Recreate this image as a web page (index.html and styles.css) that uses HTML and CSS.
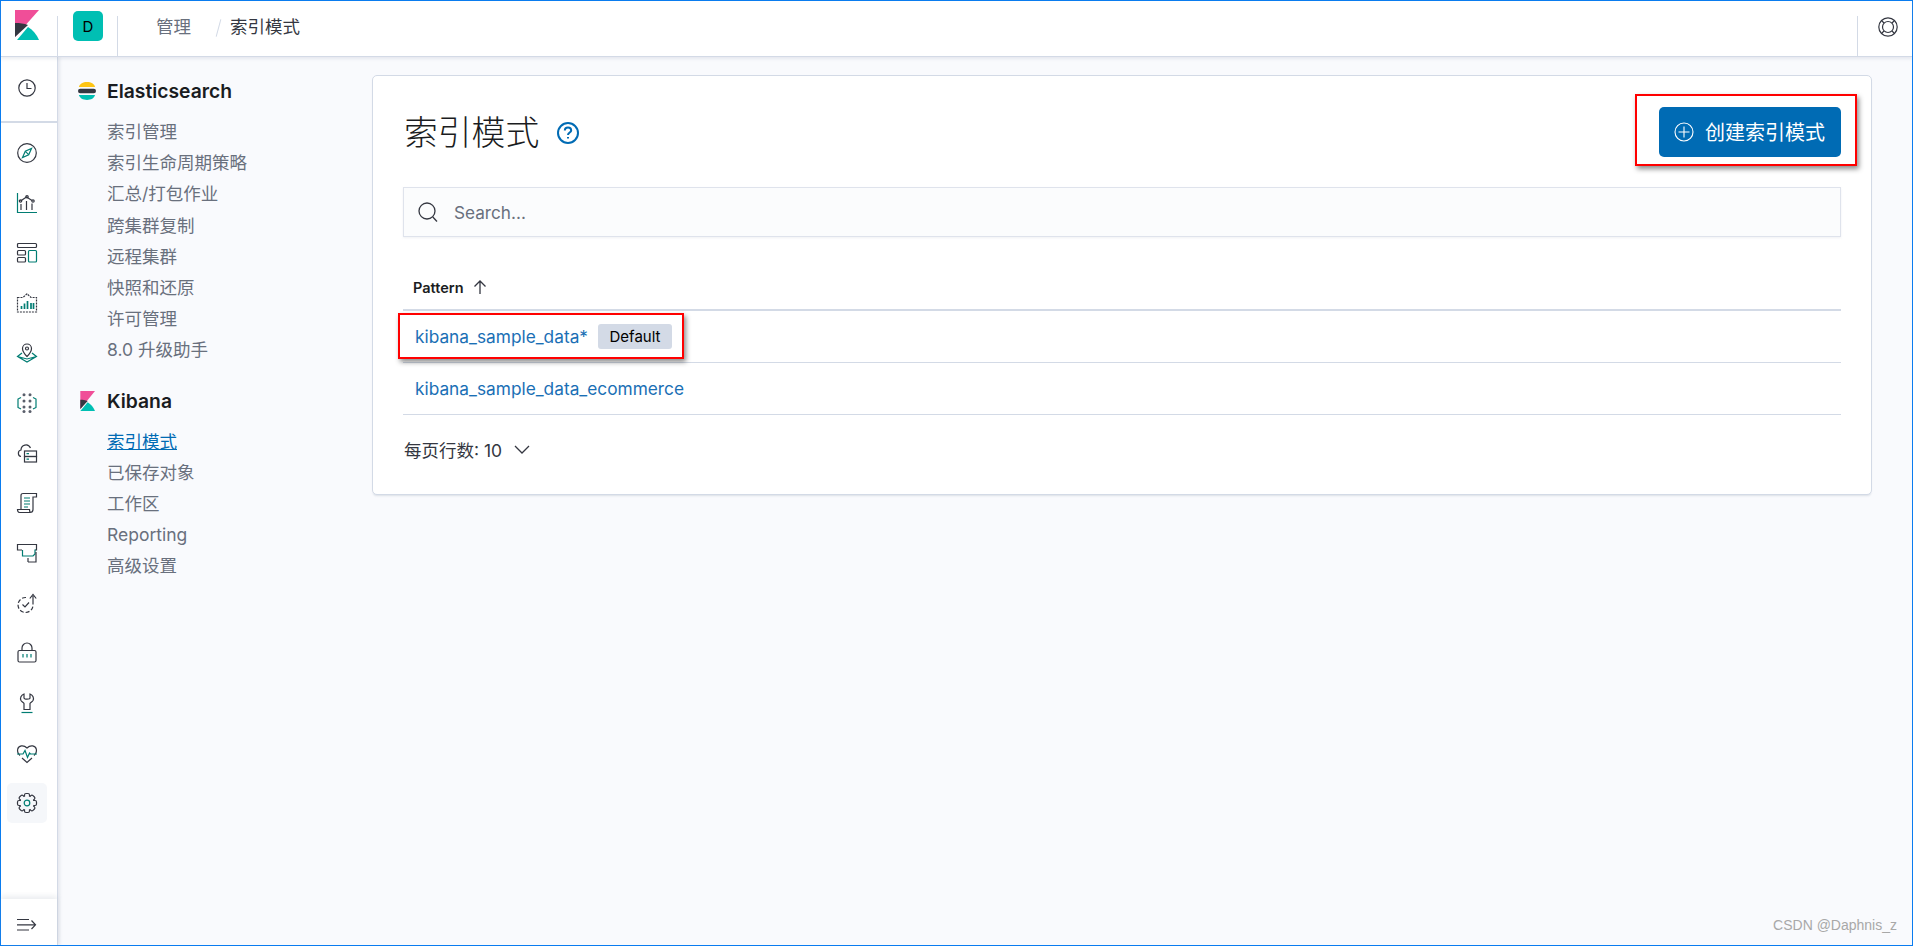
FILE: index.html
```html
<!DOCTYPE html>
<html lang="zh">
<head>
<meta charset="utf-8">
<title>索引模式 - Kibana</title>
<link rel="stylesheet" href="styles.css">
</head>
<body>
<div class="app">
  <header class="topbar">
    <div class="logo-cell">
      <svg class="logo" viewBox="0 0 24 30"><path class="k-pink" d="M0 0H24L0 27Z"/><path class="k-dark" d="M0 13C5 13 9 13.600 13 15L0 27Z"/><path class="k-teal" d="M2 30L13 17C18 20 22 25 24 30Z"/></svg>
    </div>
    <span class="vline"></span>
    <div class="avatar-cell"><span class="avatar">D</span></div>
    <span class="vline"></span>
    <nav class="crumbs"><span class="crumb">管理</span><span class="crumb-sep"></span><span class="crumb-current">索引模式</span></nav>
    <span class="vline"></span>
    <div class="help-cell">
      <svg class="ico" viewBox="0 0 20 20"><circle class="d" cx="10" cy="10" r="9.200"/><circle class="d" cx="10" cy="10" r="5.500"/><path class="d" d="M3.500 3.500L6 6M16.500 3.500L14 6M3.500 16.500L6 14M16.500 16.500L14 14" stroke-width="3"/></svg>
    </div>
  </header>
  <div class="body">
    <aside class="rail">
      <div class="rail-top">
        <a class="rail-item"><svg class="ico" viewBox="0 0 20 20"><circle class="d" cx="10" cy="10" r="8.200"/><path class="d" d="M10 5V10.500H14.500"/></svg></a>
      </div>
      <div class="rail-list">
        <a class="rail-item"><svg class="ico" viewBox="0 0 20 20"><circle class="d" cx="10" cy="10" r="9.300"/><path class="t" d="M14.500 5.500L11.700 11.700L5.500 14.500L8.300 8.300Z"/><path class="t" d="M8.300 8.300L11.700 11.700"/></svg></a>
        <a class="rail-item"><svg class="ico" viewBox="0 0 20 20"><path class="t" d="M.5 0V19.500H20"/><path class="d" d="M3.500 8L9.500 4L15 7.500M4 11V17M9.500 8V17M15 10.500V17"/><circle class="d" cx="3.500" cy="8" r="1.200"/><circle class="d" cx="10" cy="3.800" r="1.200"/><circle class="d" cx="16" cy="8" r="1.200"/></svg></a>
        <a class="rail-item"><svg class="ico" viewBox="0 0 20 20"><rect class="d" x=".5" y=".5" width="19" height="4" rx="1"/><rect class="d" x=".5" y="7.500" width="8" height="4.500" rx="1"/><rect class="d" x=".5" y="14.500" width="8" height="4.500" rx="1"/><rect class="t" x="11.500" y="7.500" width="8" height="11.500" rx="1"/></svg></a>
        <a class="rail-item"><svg class="ico" viewBox="0 0 20 20"><path class="d dash" d="M.5 4.500H6L10 .8L14 4.500H19.500V19H.5Z"/><path class="t thick" d="M4.500 16V13M7.500 16V10.500M10.500 16V8M14 16V10M16.500 10V16"/></svg></a>
        <a class="rail-item"><svg class="ico" viewBox="0 0 20 20"><path class="d" d="M10 13.500C7 10.500 5.500 8.500 5.500 5.500A4.500 4.500 0 0 1 14.500 5.500C14.500 8.500 13 10.500 10 13.500Z"/><circle class="d" cx="10" cy="5.500" r="1.500"/><path class="t" d="M5 10L.5 13.500L10 19L19.500 13.500L15 10M.5 13.500L10 16L19.500 13.500"/></svg></a>
        <a class="rail-item"><svg class="ico" viewBox="0 0 20 20"><path class="t" d="M4 4.500L1 6V14.500L4 16M16 4.500L19 6V14.500L16 16"/><g class="dots"><circle cx="7" cy="1.800" r="1.500"/><circle cx="13" cy="1.800" r="1.500"/><circle cx="7" cy="8" r="1.500"/><circle cx="13" cy="8" r="1.500"/><circle cx="7" cy="14" r="1.500"/><circle cx="13" cy="14" r="1.500"/><circle cx="7" cy="18.500" r="1.500"/><circle cx="13" cy="18.500" r="1.500"/></g></svg></a>
        <a class="rail-item"><svg class="ico" viewBox="0 0 20 20"><path class="d" d="M4 13.500C.5 13 .5 7.500 4 7C4 2 11 -.5 13.500 5"/><rect class="d" x="7.500" y="8" width="12" height="5.500"/><rect class="d" x="7.500" y="13.500" width="12" height="5.500"/><path class="t" d="M9.500 10.700H12M9.500 16.200H12"/></svg></a>
        <a class="rail-item"><svg class="ico" viewBox="0 0 20 20"><path class="d" d="M4 16V2.500C4 1.200 5 .5 6 .5H19.500V4H16V16.500C16 18.500 15 19.500 13 19.500H2.500C1 19.500 .5 18 .5 16.500H12.500C12.500 18 13 19.500 14 19.500"/><path class="t" d="M7 5H13M7 8H13M7 11H13M7 14H11"/></svg></a>
        <a class="rail-item"><svg class="ico" viewBox="0 0 20 20"><path class="d" d="M5 7H.5V1.500H19.500V7H18"/><path class="t" d="M5.500 7V13H16L18 11V6.500"/><path class="d" d="M11 19H19V9M11 19V15"/></svg></a>
        <a class="rail-item"><svg class="ico" viewBox="0 0 20 20"><path class="d dash2" d="M9 4.500A7.500 7.500 0 1 0 16 11.500"/><path class="d" d="M16 11.500V3M12.800 5.500L16 1.500L19.200 5.500"/><path class="d" d="M5.500 11.500L8 14L12 9.500"/></svg></a>
        <a class="rail-item"><svg class="ico" viewBox="0 0 20 20"><rect class="d" x="1" y="7.500" width="18" height="11.500" rx="1.500"/><path class="d" d="M5 7.500V5A5 5 0 0 1 15 5V7.500"/><path class="t" d="M6 11V14.500M10 11V14.500M14 11V14.500"/></svg></a>
        <a class="rail-item"><svg class="ico" viewBox="0 0 20 20"><path class="d" d="M7 1C4 2 2.800 5 4 7.500C5 9 6.500 9.500 7 10.500V16.500H13V10.500C13.500 9.500 15 9 16 7.500C17.200 5 16 2 13 1V5C13 6.500 7 6.500 7 5Z"/><path class="t" d="M4.500 19.500H15.500"/></svg></a>
        <a class="rail-item"><svg class="ico" viewBox="0 0 20 20"><path class="d" d="M3 12.500C.8 10.500 .2 8.500 .7 6.200C1.500 2.500 6.500 1.500 10 5C13.500 1.500 18.500 2.500 19.300 6.200C19.800 8.500 19.200 10.500 17 12.500M5 15L10 19.500L15 15"/><path class="t" d="M0 11H6L8 7.500L10.500 14.500L12.500 10L13.500 11H20"/></svg></a>
        <a class="rail-item rail-current"><svg class="ico" viewBox="0 0 20 20"><circle class="d" cx="10" cy="10" r="7.300"/><g class="teeth"><rect x="7.500" y=".5" width="5" height="19" rx="1.500"/><rect x="7.500" y=".5" width="5" height="19" rx="1.500" transform="rotate(45 10 10)"/><rect x="7.500" y=".5" width="5" height="19" rx="1.500" transform="rotate(90 10 10)"/><rect x="7.500" y=".5" width="5" height="19" rx="1.500" transform="rotate(135 10 10)"/></g><circle class="gear-hole" cx="10" cy="10" r="6.700"/><circle class="t" cx="10" cy="10" r="2.800"/></svg></a>
      </div>
      <div class="rail-foot">
        <svg class="ico" viewBox="0 0 20 20"><path class="d" d="M0 4.500H12M0 9.800H17.500M0 15H12M14.500 5.500L18.500 9.800L14.500 14"/></svg>
      </div>
    </aside>
    <aside class="subnav">
      <h2 class="sub-head"><svg class="sub-logo" viewBox="0 0 20 20"><path class="e-y" d="M1 5.500C2 2 5.500 0 10 0S18 2 19 5.500Z"/><rect class="e-d" x="0" y="7.500" width="20" height="5" rx="2.500"/><path class="e-t" d="M1 14.500C2 18 5.500 20 10 20S18 18 19 14.500Z"/></svg>Elasticsearch</h2>
      <ul class="sub-list">
        <li>索引管理</li>
        <li>索引生命周期策略</li>
        <li>汇总/打包作业</li>
        <li>跨集群复制</li>
        <li>远程集群</li>
        <li>快照和还原</li>
        <li>许可管理</li>
        <li>8.0 升级助手</li>
      </ul>
      <h2 class="sub-head sub-head-2"><svg class="sub-logo" viewBox="0 0 24 30"><path class="k-pink" d="M2 0H24L2 27Z"/><path class="k-dark" d="M2 13C6 13 9 13.600 13 15L2 27Z"/><path class="k-teal" d="M2 30L13 17C18 20 22 25 24 30Z"/></svg>Kibana</h2>
      <ul class="sub-list">
        <li class="sub-current">索引模式</li>
        <li>已保存对象</li>
        <li>工作区</li>
        <li>Reporting</li>
        <li>高级设置</li>
      </ul>
    </aside>
    <main class="main">
      <section class="card">
        <div class="card-head">
          <h1 class="title">索引模式</h1>
          <svg class="help" viewBox="0 0 22 22"><circle cx="11" cy="11" r="10"/><path d="M7.800 8.500C7.800 6.700 9.200 5.600 11 5.600C12.800 5.600 14.200 6.700 14.200 8.400C14.200 10.500 11 10.600 11 13"/><path d="M11 15V16.600"/></svg>
          <button class="create"><svg class="plus" viewBox="0 0 20 20"><circle cx="10" cy="10" r="9"/><path d="M10 4.500V15.500M4.500 10H15.500"/></svg>创建索引模式</button>
        </div>
        <div class="search">
          <svg class="search-ico" viewBox="0 0 20 20"><circle cx="9" cy="9" r="8"/><path d="M14.800 15L19 19.500"/></svg>
          <span class="search-text">Search...</span>
        </div>
        <div class="table">
          <div class="th">Pattern<svg class="arrow" viewBox="0 0 14 14"><path d="M7 14V1M1.500 6.500L7 1L12.500 6.500"/></svg></div>
          <div class="tr"><a class="link">kibana_sample_data*</a><span class="badge">Default</span></div>
          <div class="tr"><a class="link">kibana_sample_data_ecommerce</a></div>
        </div>
        <div class="pager">每页行数: 10<svg class="chev" viewBox="0 0 16 9"><path d="M1 1L8 8L15 1"/></svg></div>
        <span class="mark mark-btn"></span>
        <span class="mark mark-row"></span>
      </section>
    </main>
  </div>
  <span class="watermark">CSDN @Daphnis_z</span>
</div>
</body>
</html>
```

FILE: styles.css
```css
* { box-sizing: border-box; }
html, body { margin: 0; padding: 0; height: 100%; }
body { font-family: Inter, "Noto Sans CJK SC", sans-serif; font-size: 17.5px; color: #343741; overflow: hidden; }
.app { position: relative; height: 946px; width: 1913px; border: 1px solid #0a7cf0; display: flex; flex-direction: column; background: #f9fafd; }

.topbar { height: 56px; flex: none; display: flex; background: #fff; border-bottom: 1px solid #d3dae6; box-shadow: 0 2px 3px rgba(152,162,179,.2); position: relative; z-index: 3; }
.vline { width: 1px; height: 40px; align-self: flex-end; background: #d3dae6; flex: none; }
.logo-cell { width: 56px; flex: none; padding: 9px 0 0 14px; }
.logo { width: 24px; height: 30px; display: block; }
.k-pink { fill: #f04e98; }
.k-dark { fill: #343741; }
.k-teal { fill: #00bfb3; }
.avatar-cell { width: 59px; flex: none; padding: 10px 0 0 15px; }
.avatar { display: flex; width: 30px; height: 30px; border-radius: 5px; background: #00bfb3; color: #000; font-size: 15px; align-items: center; justify-content: center; }
.crumbs { flex: 1; display: flex; align-items: center; height: 49px; padding-left: 38px; }
.crumb { color: #69707d; }
.crumb-sep { width: 1px; height: 18px; margin: 4px 11px 0 27px; background: #d3dae6; transform: rotate(15deg); }
.crumb-current { color: #343741; }
.help-cell { width: 54px; flex: none; padding: 16px 0 0 20px; }
.ico { width: 20px; height: 20px; display: block; overflow: visible; }
.d, .t { fill: none; stroke-width: 1.200; }
.d { stroke: #343741; }
.t { stroke: #017d73; }
.dash { stroke-dasharray: 2 1; }
.dash2 { stroke-dasharray: 4 2; }
.thick { stroke-width: 1.700; }
.dots circle { fill: #5a5f6b; }
.teeth rect { fill: #f5f7fa; stroke: #343741; stroke-width: 1.200; }
.gear-hole { fill: #f5f7fa; }

.body { flex: 1; display: flex; min-height: 0; }
.rail { width: 57px; flex: none; display: flex; flex-direction: column; background: #fff; border-right: 1px solid #d3dae6; box-shadow: 2px 0 3px rgba(152,162,179,.2); position: relative; z-index: 2; }
.rail-top { padding: 6px 0 8px; border-bottom: 2px solid #d3dae6; }
.rail-list { flex: 1; padding-top: 5px; }
.rail-item { display: flex; height: 50px; align-items: center; justify-content: center; padding-right: 4px; }
.rail-current { background: #f5f7fa; border-radius: 5px; height: 40px; margin: 5px 6px; width: 40px; padding-right: 0; }
.rail-foot { height: 46px; padding: 16px 0 0 16px; box-shadow: 0 -3px 5px rgba(152,162,179,.18); }

.subnav { width: 314px; flex: none; padding: 24px 0 0 20px; }
.sub-head { margin: 0 0 15px; display: flex; align-items: center; height: 20px; font-size: 19.300px; font-weight: 600; color: #1a1c21; line-height: 20px; }
.sub-head-2 { margin-top: 25px; }
.sub-logo { width: 18px; height: 20px; margin-right: 11px; flex: none; }
.e-y { fill: #fec514; }
.e-d { fill: #343741; }
.e-t { fill: #00bfb3; }
.sub-list { list-style: none; margin: 0; padding: 0 0 0 29px; color: #69707d; }
.sub-list li { height: 31.200px; line-height: 31.200px; white-space: nowrap; }
.sub-current { color: #006bb4; text-decoration: underline; }

.main { flex: 1; padding: 18px 40px 0 0; }
.card { position: relative; height: 420px; background: #fff; border: 1px solid #d3dae6; border-radius: 5px; padding: 0 30px 0 32px; box-shadow: 0 2px 2px -1px rgba(152,162,179,.3); }
.card-head { height: 111px; display: flex; align-items: center; padding-top: 3px; }
.title { margin: 0 0 0 -1px; font-size: 33.800px; font-weight: 300; color: #1a1c21; line-height: 40px; }
.help { width: 22px; height: 22px; margin: 0 auto 0 18px; fill: none; stroke: #006bb4; stroke-width: 2; }
.create { width: 182px; height: 50px; margin-top: -3px; background: #006bb4; border: 0; border-radius: 5px; color: #fff; font: inherit; font-size: 20px; display: flex; align-items: center; padding: 0 0 0 15px; }
.plus { width: 20px; height: 20px; margin-right: 11px; fill: none; stroke: #fff; stroke-width: 1.100; }
.search { height: 50px; margin-left: -2px; background: #fbfcfd; border: 1px solid #dfe3ec; box-shadow: 0 1px 2px rgba(152,162,179,.15); display: flex; align-items: center; padding-left: 14px; }
.search-ico { width: 20px; height: 20px; margin-right: 16px; fill: none; stroke: #343741; stroke-width: 1.300; }
.search-text { color: #69707d; font-size: 17.200px; }
.table { margin-left: -2px; padding-top: 30px; }
.th { display: flex; align-items: center; height: 44px; padding: 0 0 2px 10px; border-bottom: 2px solid #d3dae6; font-size: 14.500px; font-weight: 600; color: #1a1c21; }
.arrow { width: 14px; height: 14px; margin-left: 9px; fill: none; stroke: #343741; stroke-width: 1.300; }
.tr { display: flex; align-items: center; height: 52px; padding-left: 12px; border-bottom: 1px solid #d3dae6; }
.link { color: #1a6fb5; font-size: 17.300px; }
.badge { margin-left: 10px; width: 74px; height: 25px; line-height: 25px; text-align: center; background: #d3dae6; border-radius: 3px; color: #000; font-size: 15px; }
.pager { display: flex; align-items: center; height: 68px; margin-left: -1px; color: #343741; font-size: 17.500px; }
.chev { width: 16px; height: 9px; margin-left: 12px; fill: none; stroke: #343741; stroke-width: 1.300; }
.mark { position: absolute; border: 2px solid #f00; box-shadow: 2px 3px 5px rgba(0,0,0,.45); pointer-events: none; }
.mark-btn { left: 1262px; top: 18px; width: 222px; height: 72px; }
.mark-row { left: 25px; top: 237px; width: 286px; height: 46px; }
.watermark { position: absolute; right: 15px; bottom: 12px; font-family: "Liberation Sans", sans-serif; font-size: 14px; color: #a8a8a8; }
```
